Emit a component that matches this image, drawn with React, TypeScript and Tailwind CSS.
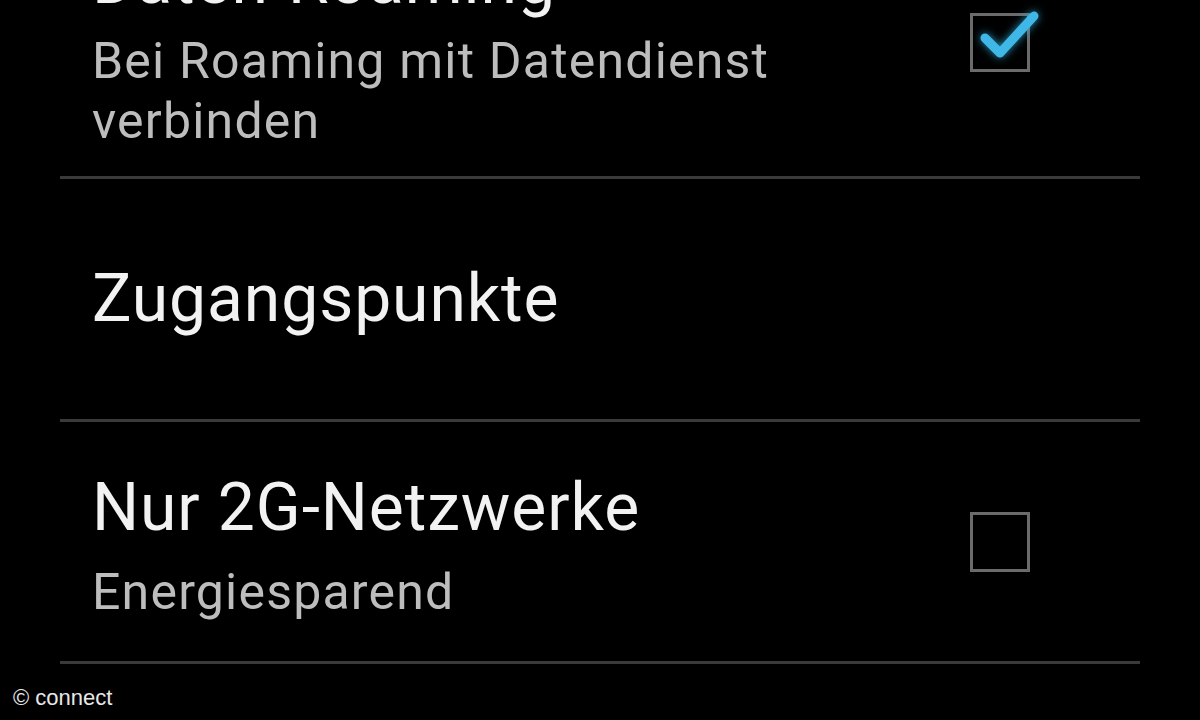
import React from "react";

const Divider = () => <div className="mx-[60px] h-[3px] bg-[#3a3a3a]" />;

export default function App() {
  return (
    <div
      className="relative w-[1200px] h-[720px] overflow-hidden bg-black"
      style={{ fontFamily: "Roboto, 'Noto Sans', sans-serif" }}
    >
      {/* Row 1: Daten-Roaming */}
      <div className="flex mt-[-59px] pb-[25px]">
        <div className="pl-[92px]">
          <div className="text-[66px] leading-[80px] tracking-[0.9px] text-[#f2f2f2]">Daten-Roaming</div>
          <div className="mt-[10px] text-[50px] leading-[60px] tracking-[1.2px] text-[#bdbdbd]">
            Bei Roaming mit Datendienst
            <br />
            verbinden
          </div>
        </div>
        <div className="ml-auto mr-[170px] mt-[72px] relative w-[60px] h-[59px] border-[3px] border-[#6b6b6b]">
          <svg
            className="absolute left-[-3px] top-[-3px] overflow-visible"
            width="60"
            height="59"
            viewBox="0 0 60 59"
            style={{ filter: "drop-shadow(0 0 4px rgba(51,181,229,0.8))" }}
          >
            <polyline
              points="15,25 30,40 64,3"
              fill="none"
              stroke="#3fb8e8"
              strokeWidth="9"
              strokeLinecap="round"
              strokeLinejoin="round"
            />
          </svg>
        </div>
      </div>
      <Divider />

      {/* Row 2: Zugangspunkte */}
      <div className="flex h-[240px] items-center pl-[92px]">
        <div className="text-[66px] leading-[80px] tracking-[0.9px] text-[#f2f2f2]">Zugangspunkte</div>
      </div>
      <Divider />

      {/* Row 3: Nur 2G-Netzwerke */}
      <div className="flex h-[239px]">
        <div className="pl-[92px] pt-[46px]">
          <div className="text-[66px] leading-[80px] tracking-[0.9px] text-[#f2f2f2]">Nur 2G-Netzwerke</div>
          <div className="mt-[14px] text-[50px] leading-[60px] tracking-[1.2px] text-[#bdbdbd]">Energiesparend</div>
        </div>
        <div className="ml-auto mr-[170px] self-center w-[60px] h-[60px] border-[3px] border-[#6b6b6b]" />
      </div>
      <Divider />

      <div
        className="absolute left-[13px] top-[687px] text-[22px] leading-none text-[#e8e8e8]"
        style={{ fontFamily: "'Liberation Sans', Arial, sans-serif" }}
      >
        © connect
      </div>
    </div>
  );
}
